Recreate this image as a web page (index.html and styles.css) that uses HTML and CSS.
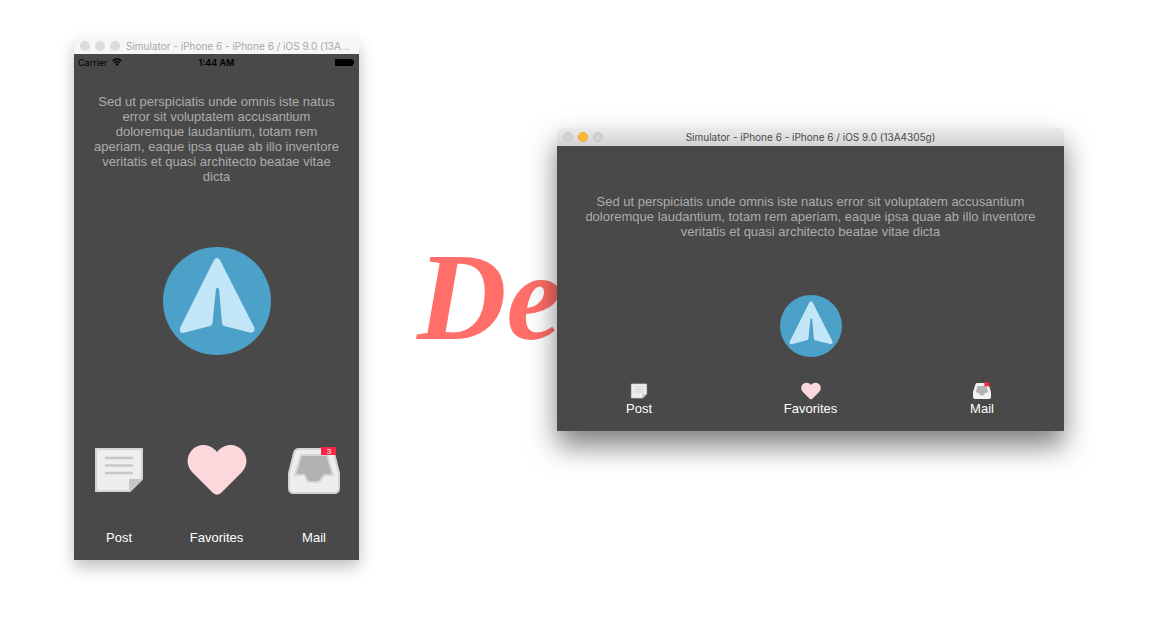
FILE: index.html
```
<!DOCTYPE html>
<html lang="en">
<head>
<meta charset="utf-8">
<title>Simulator</title>
<link rel="stylesheet" href="styles.css">
</head>
<body>
<svg class="symbols" aria-hidden="true">
  <symbol id="plane" viewBox="0 0 108 108">
    <circle cx="54" cy="54" r="54" fill="#4ba1c8"/>
    <path d="M51 13 Q54 9 57 13 L91.500 81 Q92 86 87 85.500 L61 79 Q59 78 59 76 L56 42 Q54.500 39 53 42 L49.500 76 Q49.500 78 47 79 L20 86 Q16 86 17 81 Z" fill="#c2e5f7"/>
  </symbol>
  <symbol id="note" viewBox="0 0 60 60">
    <path d="M7 9H53V39L41 51H7Z" fill="#eee" stroke="#d4d4d4" stroke-width="2"/>
    <path d="M40 39H53L40 52Z" fill="#c6c6c6"/>
    <path d="M16 18H44M16 25.500H44M16 33H44" stroke="#c8c8c8" stroke-width="2.500"/>
  </symbol>
  <symbol id="heart" viewBox="0 0 60 60">
    <path d="M30 12C37 3 49 3 55.500 10.500C61 17 60.500 26 55 32L34 53Q30 56.500 26 53L5 32C-.5 26-1 17 4.500 10.500C11 3 23 3 30 12Z" fill="#fbd8db"/>
  </symbol>
</svg>

<main class="desktop">
  <section class="window portrait" aria-label="Portrait simulator">
    <header class="titlebar">
      <div class="controls">
        <button class="dot" aria-label="Close"></button>
        <button class="dot" aria-label="Minimize"></button>
        <button class="dot" aria-label="Zoom"></button>
      </div>
      <h1 class="title">Simulator - iPhone 6 - iPhone 6 / iOS 9.0 (13A…</h1>
    </header>
    <div class="screen">
      <div class="status">
        <span class="carrier">Carrier
          <svg class="wifi" viewBox="0 0 18 14" aria-hidden="true"><path d="M1 5Q9-2 17 5M4 8.500Q9 4 14 8.500" fill="none" stroke="#000" stroke-width="2.400"/><path d="M6 10.500Q9 8 12 10.500L9 14Z"/></svg>
        </span>
        <span class="time">1:44 AM</span>
        <svg class="battery" viewBox="0 0 20 8" aria-hidden="true"><rect width="18" height="7" y="1" rx="1"/><rect x="18" y="3" width="1" height="3"/></svg>
      </div>
      <p class="copy">Sed ut perspiciatis unde omnis iste natus error sit voluptatem accusantium doloremque laudantium, totam rem aperiam, eaque ipsa quae ab illo inventore veritatis et quasi architecto beatae vitae dicta</p>
      <svg class="plane" viewBox="0 0 108 108" role="img" aria-label="Paper plane"><use href="#plane"/></svg>
      <nav class="actions">
        <button class="action"><svg class="icon" viewBox="0 0 60 60"><use href="#note"/></svg><span>Post</span></button>
        <button class="action"><svg class="icon" viewBox="0 0 60 60"><use href="#heart"/></svg><span>Favorites</span></button>
        <button class="action">
          <svg class="icon" viewBox="0 0 60 60">
            <path d="M15 9H45Q49 9 50 13L55 33V48Q55 53 50 53H10Q5 53 5 48V33L10 13Q11 9 15 9Z" fill="#eee" stroke="#d4d4d4" stroke-width="2"/>
            <path d="M17 15H43L49 35H43Q39 35 38 38T34 42H26Q23 42 22 38T17 35H11Z" fill="#b2b2b2" stroke="#d6d6d6" stroke-width="2"/>
            <rect x="37" y="7" width="15" height="8" fill="#fb2645"/>
            <text class="badge" x="45" y="14" text-anchor="middle">3</text>
          </svg>
          <span>Mail</span>
        </button>
      </nav>
    </div>
  </section>

  <div class="wordmark">De</div>

  <section class="window landscape" aria-label="Landscape simulator">
    <header class="titlebar">
      <div class="controls">
        <button class="dot" aria-label="Close"></button>
        <button class="dot amber" aria-label="Minimize"></button>
        <button class="dot" aria-label="Zoom"></button>
      </div>
      <h1 class="title">Simulator - iPhone 6 - iPhone 6 / iOS 9.0 (13A4305g)</h1>
    </header>
    <div class="screen">
      <p class="copy">Sed ut perspiciatis unde omnis iste natus error sit voluptatem accusantium doloremque laudantium, totam rem aperiam, eaque ipsa quae ab illo inventore veritatis et quasi architecto beatae vitae dicta</p>
      <svg class="plane" viewBox="0 0 108 108" role="img" aria-label="Paper plane"><use href="#plane"/></svg>
      <nav class="actions">
        <button class="action"><svg class="icon" viewBox="0 0 60 60"><use href="#note"/></svg><span>Post</span></button>
        <button class="action"><svg class="icon" viewBox="0 0 60 60"><use href="#heart"/></svg><span>Favorites</span></button>
        <button class="action">
          <svg class="icon" viewBox="0 0 60 60">
            <path d="M15 6H45Q49 6 50 11L57 33V48Q57 54 51 54H9Q3 54 3 48V33L10 11Q11 6 15 6Z" fill="#f2f2f2"/>
            <path d="M17 15H43L49 33L40 36L35 43H25L20 36L11 33Z" fill="#b5b5b5"/>
            <rect x="37" y="4" width="15" height="12" fill="#fb2645"/>
          </svg>
          <span>Mail</span>
        </button>
      </nav>
    </div>
  </section>
</main>
</body>
</html>
```
FILE: styles.css
```
* { box-sizing: border-box; }

body {
  margin: 0;
  background: #fff;
  font-family: "Liberation Sans", Arial, sans-serif;
}

.symbols { position: absolute; width: 0; height: 0; }

button {
  border: 0;
  padding: 0;
  background: none;
  font: inherit;
  color: inherit;
}

.desktop {
  display: grid;
  grid-template-columns: minmax(0, 285fr) minmax(0, 198fr) minmax(0, 507fr);
  align-items: start;
  padding: 38px 92px 60px 74px;
}

.window { border-radius: 4px 4px 0 0; }

.portrait { box-shadow: 0 7px 16px rgba(0, 0, 0, 0.25); }

.landscape {
  z-index: 1;
  margin-top: 90px;
  box-shadow: 0 15px 28px rgba(0, 0, 0, 0.5);
}

.titlebar {
  display: flex;
  align-items: center;
  border-radius: 4px 4px 0 0;
}

.portrait .titlebar {
  gap: 6px;
  height: 16px;
  padding: 0 4px 0 6px;
  background: #f6f6f6;
  color: #a8a8a8;
}

.landscape .titlebar {
  height: 18px;
  padding: 0 60px 0 6px;
  background: linear-gradient(#ebebeb, #d3d3d3);
  color: #4a4a4a;
}

.controls { display: flex; gap: 5px; }

.landscape .controls { width: 54px; }

.dot {
  width: 10px;
  height: 10px;
  border-radius: 50%;
  background: #dcdcdc;
}

.landscape .dot { background: #d2d2d2; border: 1px solid #c2c2c2; }

.landscape .amber { background: #fdb933; border-color: #e5a630; }

.title {
  flex: 1;
  margin: 0;
  font-family: Inter, "Liberation Sans", sans-serif;
  font-size: 10px;
  font-weight: 400;
  line-height: 14px;
  text-align: center;
  white-space: nowrap;
}

.portrait .title { text-align: left; }

.screen {
  display: flex;
  flex-direction: column;
  align-items: center;
  background: #494949;
}

.status {
  display: grid;
  grid-template-columns: 1fr auto 1fr;
  align-items: center;
  align-self: stretch;
  height: 16px;
  padding: 0 4px;
  font-family: Inter, "Liberation Sans", sans-serif;
  font-size: 9px;
  color: #000;
}

.carrier { display: flex; align-items: center; gap: 4px; }

.wifi { width: 10px; height: 8px; }

.time { font-weight: 600; }

.battery { width: 20px; height: 8px; justify-self: end; }

.copy {
  margin: 0;
  font-size: 13px;
  line-height: 15px;
  color: #acacac;
  text-align: center;
}

.portrait .copy { padding: 24px 18px 0; }

.landscape .copy { padding: 48px 24px 0; }

.plane { display: block; width: 108px; height: 108px; margin-top: 63px; }

.landscape .plane { width: 62px; height: 62px; margin-top: 56px; }

.actions {
  display: flex;
  justify-content: space-between;
  align-self: stretch;
  padding: 85px 15px 14px;
  color: #fff;
}

.landscape .actions { padding: 24px 52px 14px; }

.action {
  display: flex;
  flex-direction: column;
  align-items: center;
  gap: 30px;
  width: 60px;
  font-size: 13px;
  line-height: 16px;
}

.landscape .action { gap: 0; }

.icon { display: block; width: 60px; height: 60px; }

.landscape .icon { width: 22px; height: 20px; }

.badge { font-size: 8px; fill: #fff; }

.wordmark {
  margin: 188px 0 0 58px;
  font-family: "Liberation Serif", serif;
  font-size: 124px;
  font-style: italic;
  font-weight: 700;
  line-height: 144px;
  color: #ff6e68;
}
```
